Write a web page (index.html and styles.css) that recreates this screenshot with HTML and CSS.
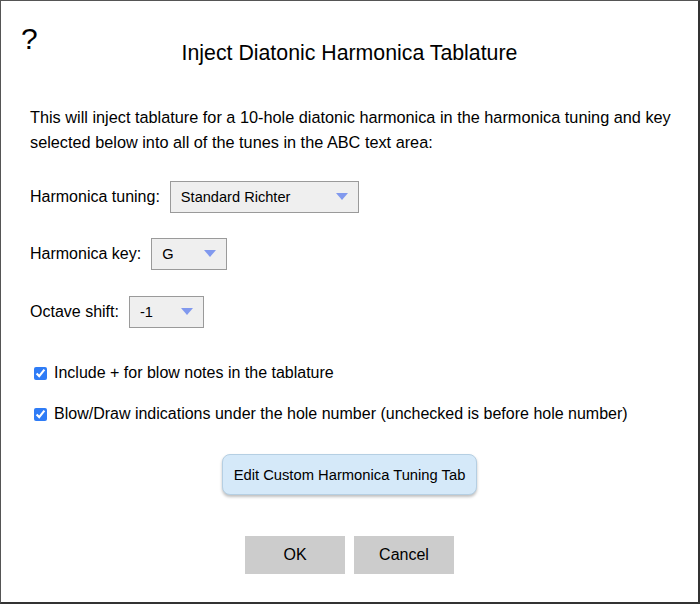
FILE: index.html
```html
<!DOCTYPE html>
<html>
<head>
<meta charset="utf-8">
<link rel="stylesheet" href="styles.css">
</head>
<body>
<div class="dialog">
  <div class="help">?</div>
  <h1 class="title">Inject Diatonic Harmonica Tablature</h1>
  <p class="intro">This will inject tablature for a 10-hole diatonic harmonica in the harmonica tuning and key selected below into all of the tunes in the ABC text area:</p>
  <div class="row row-tuning">
    <span class="label">Harmonica tuning:</span>
    <span class="select sel-tuning">Standard Richter<span class="arrow"></span></span>
  </div>
  <div class="row">
    <span class="label">Harmonica key:</span>
    <span class="select sel-key">G<span class="arrow"></span></span>
  </div>
  <div class="row row-oct">
    <span class="label">Octave shift:</span>
    <span class="select sel-oct">-1<span class="arrow"></span></span>
  </div>
  <label class="check check-first"><input type="checkbox" checked> <span>Include + for blow notes in the tablature</span></label>
  <label class="check"><input type="checkbox" checked> <span>Blow/Draw indications under the hole number (unchecked is before hole number)</span></label>
  <div class="custom-wrap"><button class="custom">Edit Custom Harmonica Tuning Tab</button></div>
  <div class="actions">
    <button class="btn">OK</button>
    <button class="btn">Cancel</button>
  </div>
</div>
</body>
</html>
```
FILE: styles.css
```css
html, body {
  margin: 0;
  padding: 0;
  background: #fff;
}
body {
  font-family: "Liberation Sans", Arial, sans-serif;
  color: #000;
}
.dialog {
  position: relative;
  box-sizing: border-box;
  width: 700px;
  height: 604px;
  border-top: 1px solid #555;
  border-left: 1px solid #555;
  border-right: 2px solid #333;
  border-bottom: 2px solid #333;
  padding: 0 18px 0 29px;
}
.help {
  position: absolute;
  left: 20px;
  top: 21px;
  font-size: 30px;
  line-height: 34px;
}
.title {
  margin: 40px 0 0;
  padding-right: 11px;
  font-size: 21.3px;
  font-weight: normal;
  line-height: 24px;
  text-align: center;
}
.intro {
  margin: 40px 0 0;
  font-size: 16.3px;
  line-height: 25px;
}
.row {
  display: flex;
  align-items: center;
  margin-top: 25px;
  font-size: 16px;
}
.row-tuning {
  margin-top: 26px;
}
.row-oct {
  margin-top: 26px;
}
.label {
  margin-right: 10px;
}
.select {
  position: relative;
  box-sizing: border-box;
  height: 32px;
  display: inline-flex;
  align-items: center;
  padding-left: 10px;
  background: #efefef;
  border: 1px solid #9a9a9a;
  font-size: 14.6px;
}
.sel-tuning { width: 189px; }
.sel-key { width: 76px; }
.sel-oct { width: 75px; }
.arrow {
  position: absolute;
  right: 10px;
  top: 11px;
  width: 0;
  height: 0;
  border-left: 6px solid transparent;
  border-right: 6px solid transparent;
  border-top: 7px solid #8199ee;
}
.check {
  display: flex;
  align-items: center;
  font-size: 16px;
  line-height: 20px;
  margin-top: 21px;
}
.check-first {
  margin-top: 35px;
}
.check input {
  width: 13px;
  height: 13px;
  margin: 0 7px 0 4px;
  accent-color: #2f7cf6;
}
.custom-wrap {
  display: flex;
  justify-content: center;
  padding-right: 11px;
  margin-top: 30px;
}
.custom {
  box-sizing: border-box;
  width: 255px;
  height: 41px;
  border: 1px solid #b5cfe3;
  border-radius: 8px;
  background: #d5e9f9;
  box-shadow: 0 2px 3px rgba(0, 0, 0, 0.25);
  font-family: "Liberation Sans", Arial, sans-serif;
  font-size: 14.75px;
  color: #000;
}
.actions {
  display: flex;
  justify-content: center;
  gap: 9px;
  padding-right: 11px;
  margin-top: 41px;
}
.btn {
  width: 100px;
  height: 38px;
  border: none;
  background: #cccccc;
  font-family: "Liberation Sans", Arial, sans-serif;
  font-size: 16px;
  color: #000;
}
```
